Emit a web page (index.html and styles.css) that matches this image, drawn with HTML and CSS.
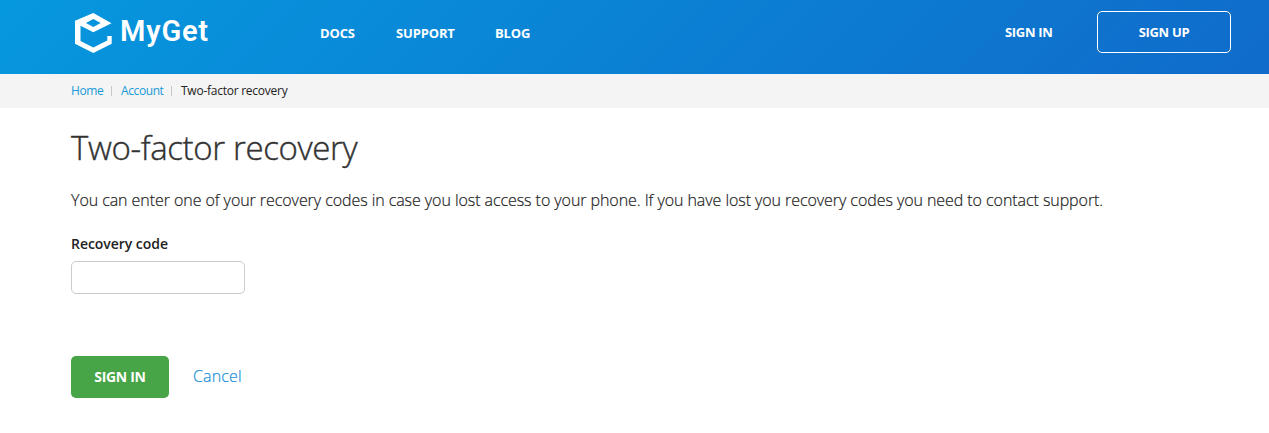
FILE: index.html
```html
<!DOCTYPE html>
<html lang="en">
<head>
<meta charset="utf-8">
<title>Two-factor recovery - MyGet</title>
<link rel="stylesheet" href="styles.css">
</head>
<body>
<header class="header">
  <a class="logo">
    <svg class="logo-mark" width="37" height="40" viewBox="0 0 37 40" aria-hidden="true">
      <path fill="#fff" fill-rule="evenodd" d="M18.3 0 36.5 10.3 18.3 19.3 5.5 12.7V28L18.3 34.4 32.3 27.4V23H36.7V30.7L18.3 40 0 30.7V7.8ZM11 10 18.3 14 25.7 10 18.3 6Z"/>
    </svg>
    <span class="logo-text">MyGet</span>
  </a>
  <nav class="nav"><a class="docs">DOCS</a><a class="support">SUPPORT</a><a class="blog">BLOG</a></nav>
  <div class="account"><a class="login">SIGN IN</a><a class="signup">SIGN UP</a></div>
</header>
<div class="breadcrumb"><a class="home">Home</a><a class="acct">Account</a><span class="current">Two-factor recovery</span></div>
<main class="content">
  <h1><span>Two-factor recovery</span></h1>
  <p class="intro">You can enter one of your recovery codes in case you lost access to your phone. If you have lost you recovery codes you need to contact support.</p>
  <form>
    <label class="label" for="code">Recovery code</label>
    <input class="input" id="code" type="text">
    <div class="actions"><button class="button" type="button">SIGN IN</button><a class="cancel">Cancel</a></div>
  </form>
</main>
</body>
</html>
```
FILE: styles.css
```css
* { box-sizing: border-box; }
body { margin: 0; background: #fff; color: #222; font-family: "Open Sans", "Noto Sans", sans-serif; font-weight: 300; overflow: hidden; }
.header { height: 74px; display: flex; align-items: flex-start; padding: 0 38px 0 75px; background: linear-gradient(135deg, #0698de, #106bca); color: #fff; }
.logo { display: flex; width: 245px; padding-top: 13px; }
.logo-mark { flex: none; }
.logo-text { margin: -1px 0 0 8px; font: 600 29px/38px Roboto, sans-serif; letter-spacing: .8px; }
.nav { display: flex; font-size: 13px; font-weight: 700; line-height: 20px; padding-top: 23px; letter-spacing: -.15px; white-space: nowrap; }
.docs { width: 76px; }
.support { width: 99px; }
.account { display: flex; margin-left: auto; padding-top: 11px; font-size: 13px; font-weight: 700; line-height: 42px; letter-spacing: -.3px; }
.login { width: 92px; }
.signup { width: 134px; height: 42px; line-height: 40px; border: 1px solid #fff; border-radius: 5px; text-align: center; }
.breadcrumb { display: flex; align-items: center; height: 34px; padding: 0 71px; background: #f4f4f4; font-size: 12px; font-weight: 400; line-height: 34px; white-space: nowrap; letter-spacing: -.4px; }
.breadcrumb a { color: #1a9ad7; position: relative; }
.home { width: 50px; }
.acct { width: 60px; }
.current { letter-spacing: -.25px; }
.breadcrumb a::after { content: ""; position: absolute; right: 9px; top: 12px; width: 1px; height: 10px; background: #c8c8c8; }
.content { padding: 17px 71px 0; }
h1 { margin: 0; color: #333; font-size: 33px; line-height: 46px; font-weight: 300; white-space: nowrap; letter-spacing: -.37px; -webkit-text-stroke: .4px; }
.intro { margin: 17px 0 0; font-size: 16px; line-height: 24px; letter-spacing: -.065px; white-space: nowrap; -webkit-text-stroke: .2px; }
.label { display: block; margin-top: 22px; font-size: 14px; line-height: 20px; font-weight: 600; letter-spacing: -.04px; }
.input { display: block; width: 174px; height: 33px; margin-top: 7px; border: 1px solid #ccc; border-radius: 5px; background: #fff; }
.actions { display: flex; align-items: flex-start; margin-top: 62px; }
.button { width: 98px; height: 42px; padding: 0; border: 0; border-radius: 5px; background: #47a447; color: #fff; font: 700 14px/42px "Open Sans", sans-serif; letter-spacing: -.3px; }
.cancel { margin-left: 24px; color: #1a8fd7; font-size: 16px; line-height: 40px; letter-spacing: .15px; -webkit-text-stroke: .2px; }
```
